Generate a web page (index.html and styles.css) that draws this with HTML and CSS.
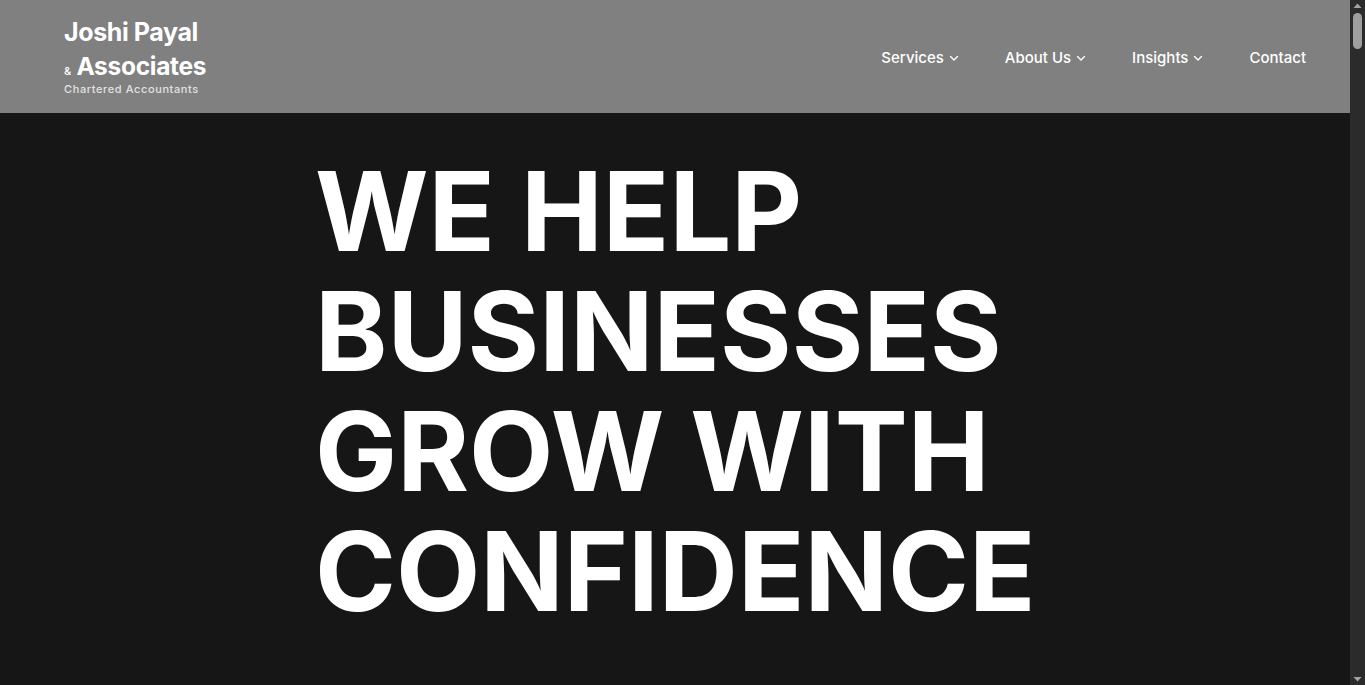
FILE: index.html
```html
<!DOCTYPE html>
<html lang="en">
<head>
<meta charset="utf-8">
<title>Joshi Payal & Associates</title>
<link rel="stylesheet" href="styles.css">
</head>
<body>
<div class="page">
  <header class="site-header">
    <a class="brand" href="#">
      <span class="brand-line1">Joshi Payal</span>
      <span class="brand-line2"><span class="amp">&amp;</span> Associates</span>
      <span class="brand-sub">Chartered Accountants</span>
    </a>
    <nav class="nav">
      <a class="nav-item" href="#">Services <svg class="chev" viewBox="0 0 10 10" width="10" height="10"><path d="M1.5 3.5 L5 7 L8.5 3.5" fill="none" stroke="currentColor" stroke-width="1.4" stroke-linecap="round" stroke-linejoin="round"/></svg></a>
      <a class="nav-item" href="#">About Us <svg class="chev" viewBox="0 0 10 10" width="10" height="10"><path d="M1.5 3.5 L5 7 L8.5 3.5" fill="none" stroke="currentColor" stroke-width="1.4" stroke-linecap="round" stroke-linejoin="round"/></svg></a>
      <a class="nav-item" href="#">Insights <svg class="chev" viewBox="0 0 10 10" width="10" height="10"><path d="M1.5 3.5 L5 7 L8.5 3.5" fill="none" stroke="currentColor" stroke-width="1.4" stroke-linecap="round" stroke-linejoin="round"/></svg></a>
      <a class="nav-item" href="#">Contact</a>
    </nav>
  </header>
  <main class="hero">
    <div class="hero-inner">
      <h1 class="hero-title">WE HELP<br>BUSINESSES<br>GROW WITH<br>CONFIDENCE</h1>
    </div>
  </main>
</div>
<div class="scrollbar" aria-hidden="true">
  <svg class="sb-arrow" viewBox="0 0 15 11" width="15" height="11"><path d="M3.5 8 L7.5 3.5 L11.5 8 Z" fill="#a3a3a3"/></svg>
  <div class="sb-thumb"></div>
  <div class="sb-track"></div>
  <svg class="sb-arrow" viewBox="0 0 15 11" width="15" height="11"><path d="M3.5 3 L7.5 7.5 L11.5 3 Z" fill="#a3a3a3"/></svg>
</div>
</body>
</html>
```
FILE: styles.css
```css
html {
  background: #161616;
}
body {
  margin: 0;
  height: 685px;
  overflow: hidden;
  display: flex;
  font-family: Inter, "Noto Sans", sans-serif;
  background: #161616;
  color: #fff;
}
a { color: inherit; text-decoration: none; }

.page {
  flex: 1;
  display: flex;
  flex-direction: column;
  min-width: 0;
}

.site-header {
  height: 113px;
  flex: none;
  background: #808080;
  display: flex;
  align-items: center;
  justify-content: space-between;
  padding: 0 44px 0 64px;
}
.brand {
  display: flex;
  flex-direction: column;
  line-height: 1;
  margin-top: 2px;
}
.brand-line1 {
  font-size: 25px;
  font-weight: 700;
  letter-spacing: -0.4px;
}
.brand-line2 {
  font-size: 24.5px;
  font-weight: 700;
  margin-top: 9px;
  letter-spacing: -0.3px;
}
.amp {
  font-size: 11px;
  font-weight: 500;
}
.brand-sub {
  font-size: 11px;
  font-weight: 500;
  color: #e2e2e2;
  letter-spacing: 0.6px;
  margin-top: 5px;
}
.nav {
  display: flex;
  align-items: center;
  gap: 46px;
  margin-top: 2px;
}
.nav-item {
  font-size: 15px;
  font-weight: 500;
  display: flex;
  align-items: center;
  gap: 5px;
}
.chev { display: block; }

.hero {
  flex: 1;
}
.hero-inner {
  width: 720px;
  margin: 0 auto;
  padding-top: 38px;
}
.hero-title {
  margin: 0;
  font-size: 109.5px;
  line-height: 120px;
  font-weight: 700;
  letter-spacing: 0;
}

.scrollbar {
  width: 15px;
  flex: none;
  background: #2b2b2b;
  display: flex;
  flex-direction: column;
  align-items: center;
}
.sb-arrow { display: block; flex: none; }
.sb-thumb {
  width: 9px;
  height: 36px;
  margin-top: 2px;
  border-radius: 5px;
  background: #9f9f9f;
  flex: none;
}
.sb-track { flex: 1; }
```
